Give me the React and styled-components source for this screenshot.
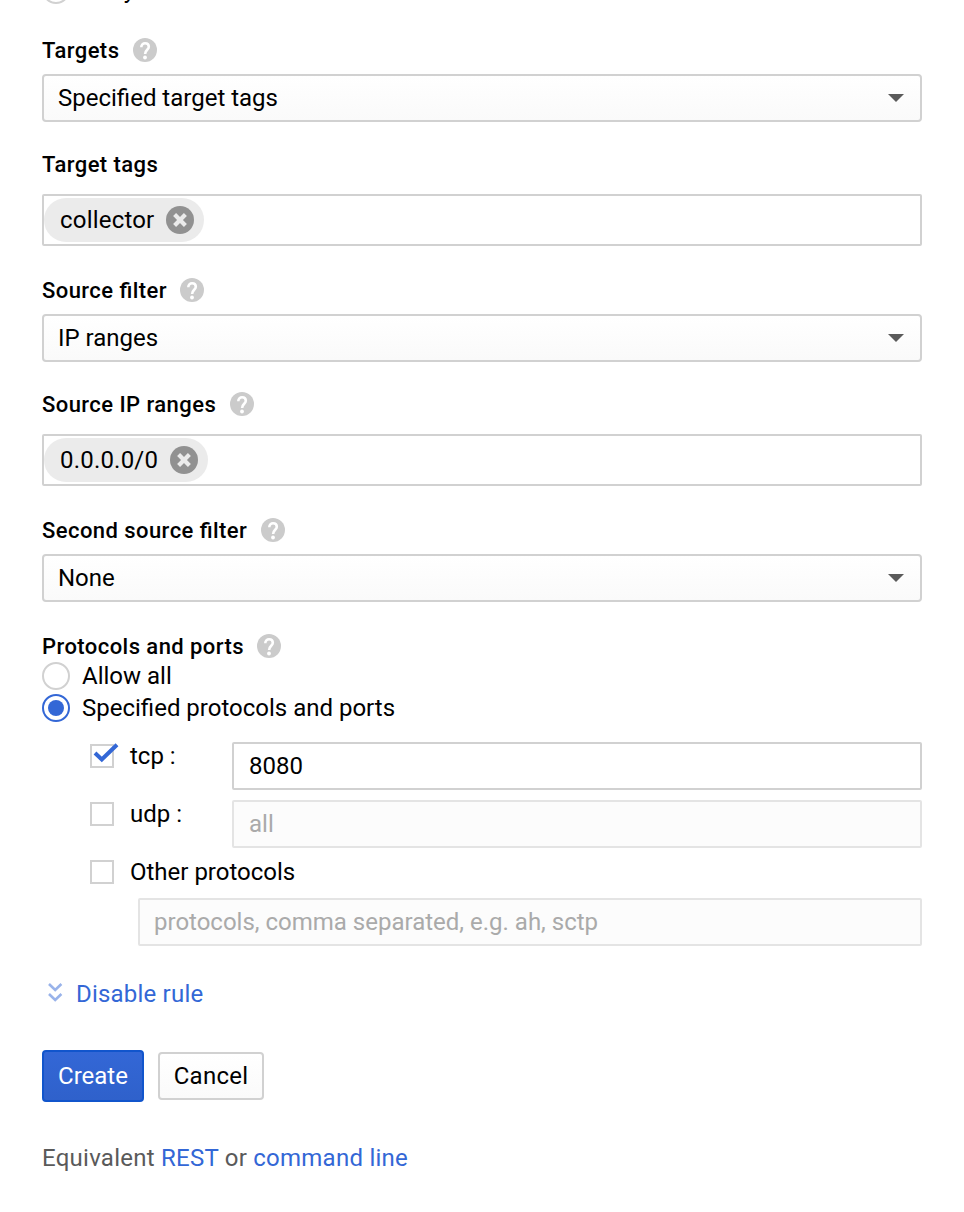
import React from 'react';
import styled, { createGlobalStyle, css } from 'styled-components';

const GlobalStyle = createGlobalStyle`
  * { box-sizing: border-box; }
  html, body { margin: 0; background: #fff; }
  body {
    font-family: Roboto, 'Liberation Sans', sans-serif;
    font-size: 24px;
    line-height: 28px;
    color: #000;
  }
`;

const BLUE = '#3367d6';
const BORDER = '#d1d1d1';

const Page = styled.main`
  display: flex;
  flex-direction: column;
  width: 964px;
  height: 1212px;
  padding: 0 42px;
  overflow: hidden;
`;

const RadioGroup = styled.div`
  display: flex;
  flex-direction: column;
  gap: 4px;
  margin-top: ${(p) => p.$top}px;
`;

const RadioRow = styled.label`
  display: flex;
  align-items: center;
  gap: 12px;
  height: 28px;
`;

const RadioDot = styled.span`
  display: flex;
  align-items: center;
  justify-content: center;
  width: 28px;
  height: 28px;
  border: 2px solid ${(p) => (p.$on ? BLUE : BORDER)};
  border-radius: 50%;
  &::after {
    content: '';
    width: 16px;
    height: 16px;
    border-radius: 50%;
    background: ${(p) => (p.$on ? BLUE : 'transparent')};
  }
`;

const Field = styled.section`
  display: flex;
  flex-direction: column;
  gap: ${(p) => p.$gap}px;
  margin-top: ${(p) => p.$top}px;
`;

const Label = styled.div`
  display: flex;
  align-items: center;
  gap: 13.4px;
  height: 24px;
  font-size: 22px;
  font-weight: 500;
  letter-spacing: 0.44px;
  font-feature-settings: 'liga' 1;
  white-space: nowrap;
`;

const LabelText = styled.span`
  padding-top: 2px;
`;

const SelectBox = styled.div`
  display: flex;
  align-items: center;
  justify-content: space-between;
  height: 48px;
  padding: 0 16px 0 14px;
  border: 2px solid ${BORDER};
  border-radius: 4px;
  background: linear-gradient(#fff, #fafafa);
`;

const Caret = styled.span`
  width: 0;
  height: 0;
  border: 8px solid transparent;
  border-top-color: #5a5a5a;
  border-bottom: 0;
`;

const TagBox = styled.div`
  display: flex;
  align-items: center;
  height: 52px;
  border: 2px solid ${BORDER};
  border-radius: 2px;
`;

const Chip = styled.span`
  display: flex;
  align-items: center;
  gap: 11.6px;
  height: 44px;
  padding: 0 10px 0 16px;
  border-radius: 22px;
  background: #ebebeb;
  letter-spacing: 0.2px;
`;

const Icon = styled.svg`
  display: block;
  flex: none;
`;

const Protocols = styled.div`
  display: flex;
  flex-direction: column;
  gap: 10px;
  margin: 20px 0 0 48px;
`;

const ProtocolRow = styled.div`
  display: grid;
  grid-template-columns: 142px 1fr;
  align-items: start;
`;

const CheckRow = styled.label`
  display: flex;
  align-items: center;
  gap: 16px;
  height: 28px;
`;

const CheckBox = styled.span`
  position: relative;
  width: 24px;
  height: 24px;
  border: 2px solid ${BORDER};
`;

const Tick = styled.svg`
  position: absolute;
  left: 0;
  top: -4px;
`;

const TextInput = styled.input`
  width: 100%;
  height: 48px;
  padding: 0 15px;
  border: 2px solid ${BORDER};
  border-radius: 2px;
  outline: 0;
  background: #fff;
  color: #000;
  font: inherit;
  ${(p) =>
    p.disabled &&
    css`
      border-color: #e4e4e4;
      background: #fcfcfc;
    `}
  &::placeholder {
    color: #aaa;
    opacity: 1;
  }
`;

const OtherProtocols = styled.div`
  display: flex;
  flex-direction: column;
  gap: 12px;
`;

const OtherInput = styled(TextInput)`
  width: auto;
  margin-left: 48px;
  padding: 0 14px;
`;

const Link = styled.a`
  color: ${BLUE};
  text-decoration: none;
`;

const Expander = styled(Link)`
  display: flex;
  align-items: center;
  gap: 12px;
  height: 28px;
  margin: 34px 0 0 6px;
  letter-spacing: 0.2px;
`;

const Actions = styled.div`
  display: flex;
  align-items: center;
  gap: 14px;
  margin-top: 42px;
`;

const Button = styled.button`
  width: ${(p) => (p.$primary ? 102 : 106)}px;
  height: ${(p) => (p.$primary ? 52 : 48)}px;
  padding: 0;
  border: 2px solid ${(p) => (p.$primary ? '#1155cc' : BORDER)};
  border-radius: 4px;
  background: ${(p) =>
    p.$primary ? 'linear-gradient(#3367d6, #2f61cb)' : 'linear-gradient(#fff, #fafafa)'};
  color: ${(p) => (p.$primary ? '#fff' : '#000')};
  font: inherit;
  letter-spacing: ${(p) => (p.$primary ? 0 : 0.25)}px;
`;

const Equivalent = styled.p`
  margin: 42px 0 0;
  color: #5a5a5a;
  letter-spacing: 0.25px;
`;

const HelpIcon = () => (
  <Icon width="24" height="24" viewBox="0 0 24 24">
    <circle cx="12" cy="12" r="12" fill="#cbcbcb" />
    <path
      d="M8.3 9.2C8.3 6.9 9.9 5.3 12.1 5.3S15.8 6.8 15.8 8.8C15.8 11.8 12.1 11.8 12.1 16"
      fill="none"
      stroke="#fff"
      strokeWidth="2.6"
    />
    <circle cx="12" cy="19.5" r="1.9" fill="#fff" />
  </Icon>
);

const RemoveIcon = () => (
  <Icon width="28" height="28" viewBox="0 0 28 28">
    <circle cx="14" cy="14" r="14" fill="#919191" />
    <path d="M8.6 8.6L19.4 19.4M19.4 8.6L8.6 19.4" stroke="#ebebeb" strokeWidth="4.2" />
  </Icon>
);

const ExpandIcon = () => (
  <Icon width="16" height="22" viewBox="0 0 16 22">
    <path
      d="M1 1L7.2 7L13.4 1M1 11L7.2 17L13.4 11"
      fill="none"
      stroke="#99b3ea"
      strokeWidth="2.6"
    />
  </Icon>
);

const Radio = ({ on, children }) => (
  <RadioRow>
    <RadioDot $on={on} />
    {children}
  </RadioRow>
);

const Check = ({ on, children }) => (
  <CheckRow>
    <CheckBox>
      {on && (
        <Tick width="28" height="22" viewBox="0 0 28 22">
          <path d="M3 11L9.8 17.5L25 2.8" fill="none" stroke={BLUE} strokeWidth="4" />
        </Tick>
      )}
    </CheckBox>
    {children}
  </CheckRow>
);

const SelectField = ({ label, value, top }) => (
  <Field $top={top} $gap={12}>
    <Label>
      <LabelText>{label}</LabelText>
      <HelpIcon />
    </Label>
    <SelectBox>
      {value}
      <Caret />
    </SelectBox>
  </Field>
);

const TagField = ({ label, value, help, top }) => (
  <Field $top={top} $gap={18}>
    <Label>
      <LabelText>{label}</LabelText>
      {help && <HelpIcon />}
    </Label>
    <TagBox>
      <Chip>
        {value}
        <RemoveIcon />
      </Chip>
    </TagBox>
  </Field>
);

export default function App() {
  return (
    <>
      <GlobalStyle />
      <Page>
        <RadioGroup $top={-24}>
          <Radio>Deny</Radio>
        </RadioGroup>
        <SelectField label="Targets" value="Specified target tags" top={34} />
        <TagField label="Target tags" value="collector" top={30} />
        <SelectField label="Source filter" value="IP ranges" top={32} />
        <TagField label="Source IP ranges" value="0.0.0.0/0" help top={30} />
        <SelectField label="Second source filter" value="None" top={32} />
        <Field $top={32} $gap={0}>
          <Label>
            <LabelText>Protocols and ports</LabelText>
            <HelpIcon />
          </Label>
          <RadioGroup $top={4}>
            <Radio>Allow all</Radio>
            <Radio on>Specified protocols and ports</Radio>
          </RadioGroup>
          <Protocols>
            <ProtocolRow>
              <Check on>tcp :</Check>
              <TextInput defaultValue="8080" />
            </ProtocolRow>
            <ProtocolRow>
              <Check>udp :</Check>
              <TextInput placeholder="all" disabled />
            </ProtocolRow>
            <OtherProtocols>
              <Check>Other protocols</Check>
              <OtherInput placeholder="protocols, comma separated, e.g. ah, sctp" disabled />
            </OtherProtocols>
          </Protocols>
        </Field>
        <Expander>
          <ExpandIcon />
          Disable rule
        </Expander>
        <Actions>
          <Button $primary>Create</Button>
          <Button>Cancel</Button>
        </Actions>
        <Equivalent>
          Equivalent <Link>REST</Link> or <Link>command line</Link>
        </Equivalent>
      </Page>
    </>
  );
}
